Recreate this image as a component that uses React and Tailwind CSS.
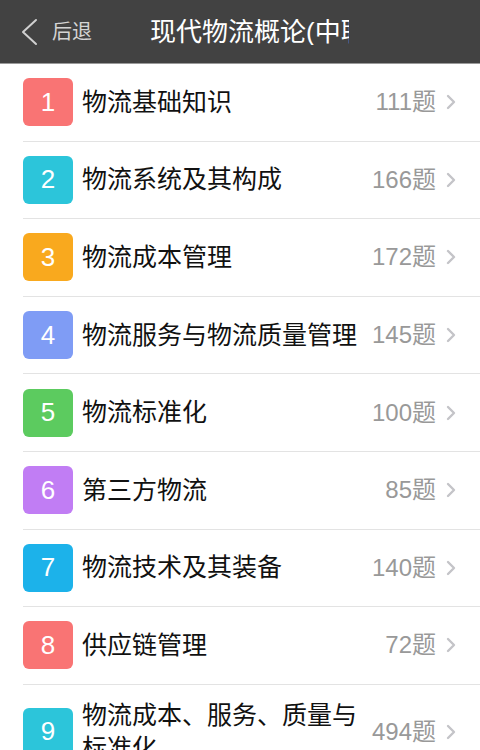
const chapters = [
  { no: 1, title: "物流基础知识", count: 111, color: "bg-[#f97474]" },
  { no: 2, title: "物流系统及其构成", count: 166, color: "bg-[#2cc5da]" },
  { no: 3, title: "物流成本管理", count: 172, color: "bg-[#f9a91e]" },
  { no: 4, title: "物流服务与物流质量管理", count: 145, color: "bg-[#7f9cf5]" },
  { no: 5, title: "物流标准化", count: 100, color: "bg-[#5ccb5f]" },
  { no: 6, title: "第三方物流", count: 85, color: "bg-[#c17df4]" },
  { no: 7, title: "物流技术及其装备", count: 140, color: "bg-[#1cb2ea]" },
  { no: 8, title: "供应链管理", count: 72, color: "bg-[#f97474]" },
  { no: 9, title: "物流成本、服务、质量与标准化", count: 494, color: "bg-[#2cc5da]" },
];

const font = { fontFamily: '"Liberation Sans", "Noto Sans CJK SC", sans-serif' };

const Header = () => (
  <div className="flex items-center h-[64px] bg-[#424242] border-b border-[#9a9a9a] pl-[20px]">
    <svg width="18" height="28" viewBox="0 0 18 28" fill="none">
      <path d="M16 2 L3 14 L16 26" stroke="#d0d0d0" strokeWidth="2" strokeLinecap="round" strokeLinejoin="round" />
    </svg>
    <span className="ml-[14px] text-[20px] text-[#d4d4d4] leading-none">后退</span>
    <div className="ml-[58px] w-[199px] overflow-hidden whitespace-nowrap text-[26px] text-white leading-none">
      现代物流概论(中职)
    </div>
  </div>
);

const Row = ({ item }) => (
  <div className="flex items-center min-h-[76.6px] py-[14px] pl-[23px] pr-[24px]">
    <div
      className={`${item.color} w-[50px] h-[48px] shrink-0 rounded-[6px] flex items-center justify-center text-white text-[26px]`}
    >
      {item.no}
    </div>
    <div className="flex-1 ml-[9px] text-[25px] leading-[33px] text-[#111]">{item.title}</div>
    <div className="ml-[6px] shrink-0 text-[24px] text-[#999] whitespace-nowrap">{item.count}题</div>
    <svg className="ml-[10px] shrink-0" width="10" height="16" viewBox="0 0 10 16" fill="none">
      <path d="M2 2 L8 8 L2 14" stroke="#c4c4c8" strokeWidth="2.4" strokeLinecap="round" strokeLinejoin="round" />
    </svg>
  </div>
);

export default function App() {
  return (
    <div className="w-[480px] h-[750px] overflow-hidden bg-white" style={font}>
      <Header />
      <div>
        {chapters.map((item, i) => (
          <div key={item.no}>
            {i > 0 && <div className="ml-[23px] h-px bg-[#e3e3e3]" />}
            <Row item={item} />
          </div>
        ))}
      </div>
    </div>
  );
}
